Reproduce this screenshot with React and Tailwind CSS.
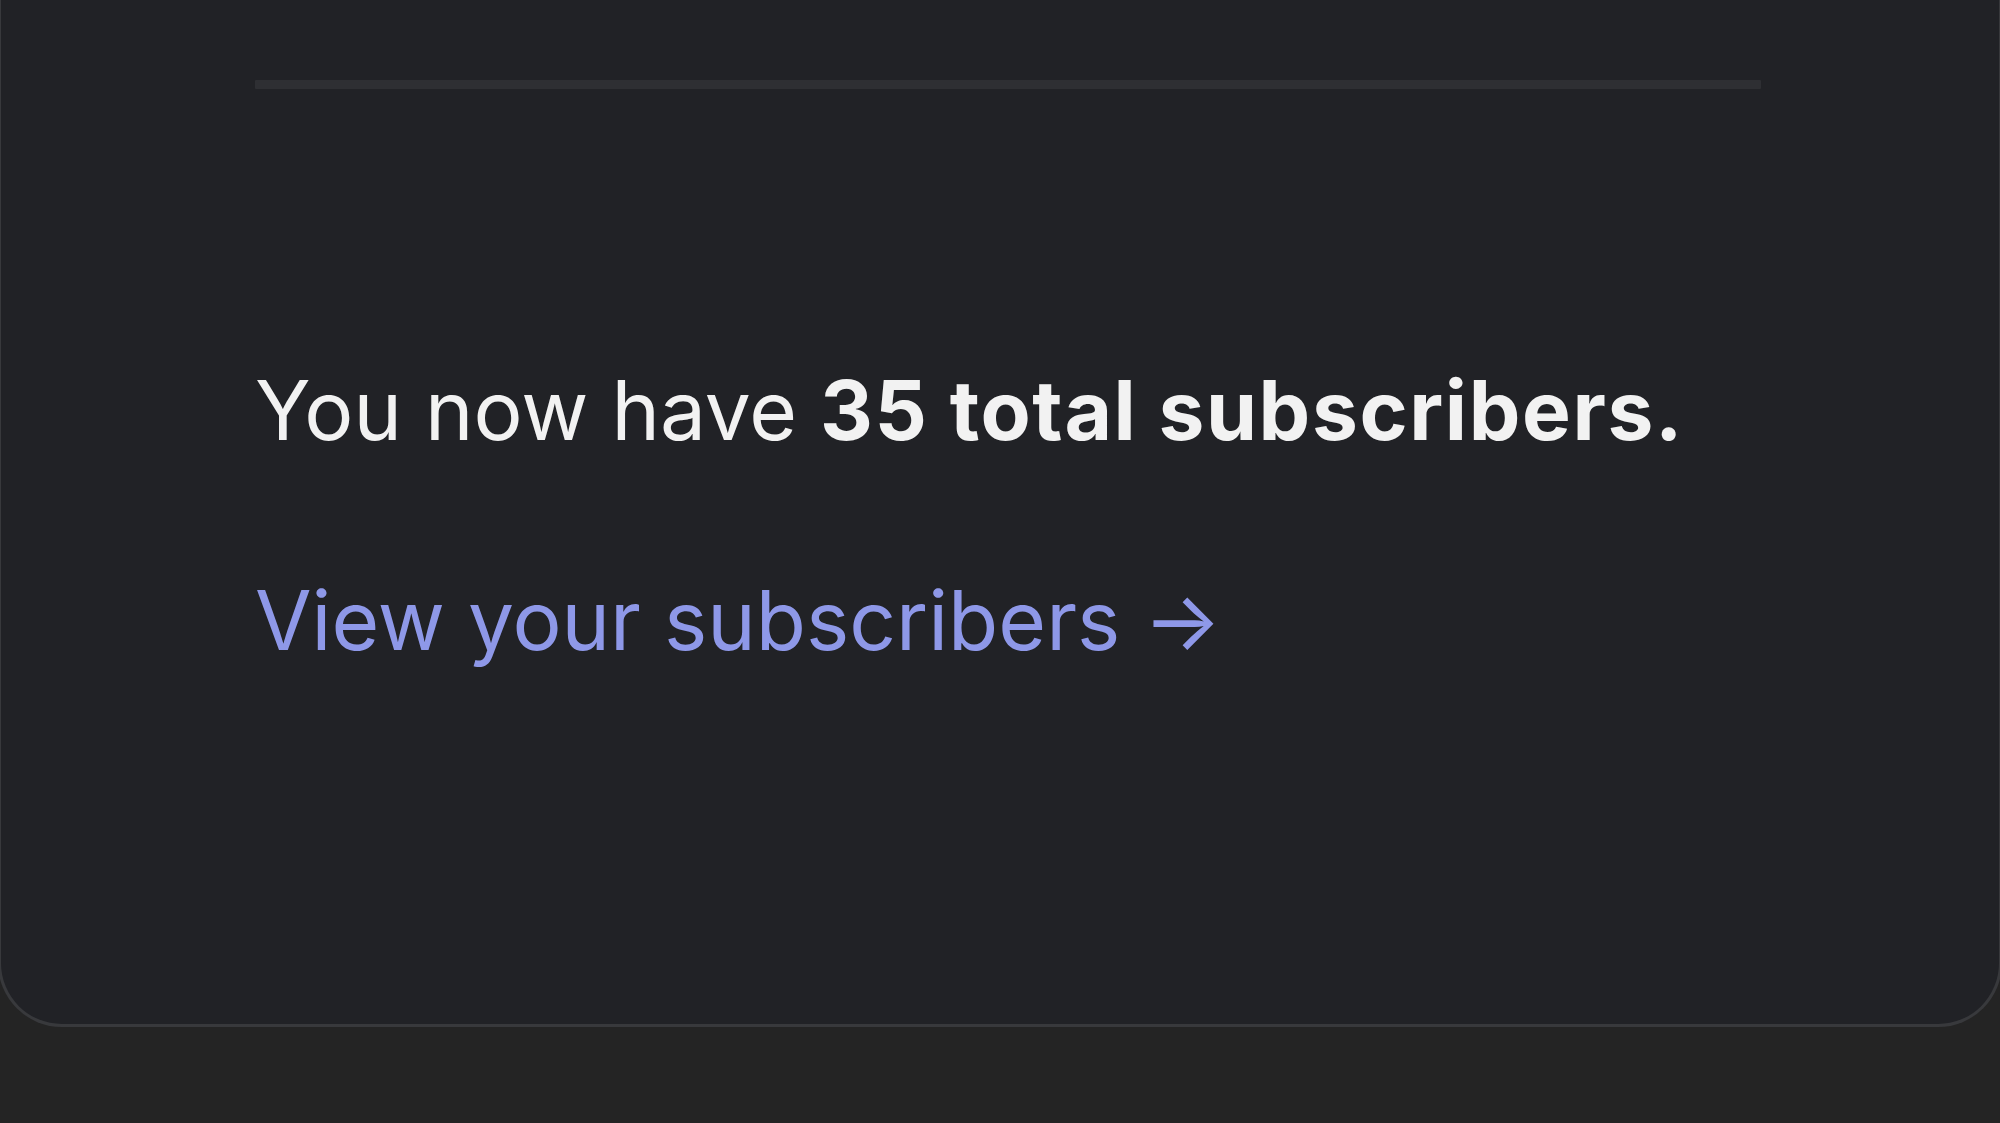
export default function App() {
  return (
    <div className="w-[2000px] h-[1123px] bg-[#242424] overflow-hidden" style={{ fontFamily: 'Inter, "Liberation Sans", sans-serif' }}>
      <div className="h-[1027px] bg-[#212226] rounded-b-[64px] border-b-[3px] border-x-[3px] border-[#38393c] -mx-[2px] flex flex-col">
        <div className="pl-[254px] pt-[80px]">
          <div className="w-[1506px] h-[9px] bg-[#2e2f33] rounded-[1px]"></div>
        </div>
        <div className="pl-[254px] pt-[272px] flex flex-col">
          <p className="text-[82px] leading-[100px] text-[#f2f2f2]">
            You now have <span className="font-bold tracking-[1.6px]">35 total subscribers.</span>
          </p>
          <p className="mt-[110px] text-[82px] leading-[100px] text-[#8e98e8]">
            View your subscribers →
          </p>
        </div>
      </div>
    </div>
  );
}
